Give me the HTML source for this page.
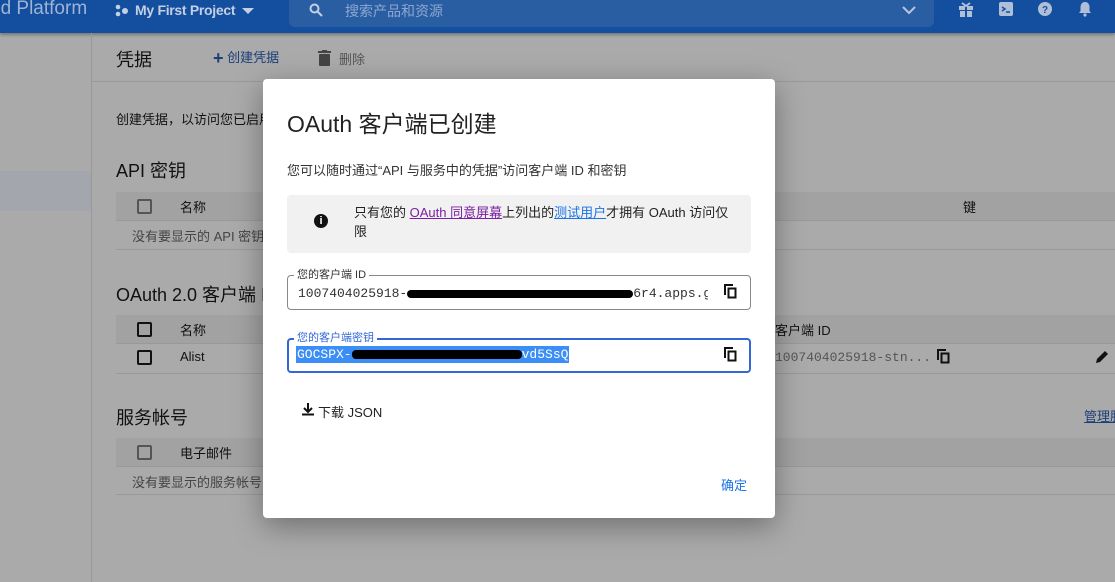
<!DOCTYPE html>
<html><head><meta charset="utf-8"><style>
*{box-sizing:border-box;margin:0;padding:0}
body{width:1115px;height:582px;overflow:hidden;background:#aaa;font-family:"Liberation Sans","Noto Sans CJK SC",sans-serif;position:relative;color:#111}
.a{position:absolute;white-space:nowrap}
.hdr{left:0;top:0;width:1115px;height:33px;background:#144e9e;box-shadow:0 2px 3px rgba(0,0,0,.3)}
.cb{width:15px;height:15px;border:2px solid #555;border-radius:2px}
.row{left:116px;width:1000px;border-bottom:1px solid #999}
.hd{background:#a2a2a2}
.t{font-size:13px}
.mono{font-family:"Liberation Mono","DejaVu Sans Mono",monospace}
</style></head><body>
<div class="a hdr">
 <div class="a" style="left:-10px;top:-2px;color:#9fb3d4;font-size:19px">ud Platform</div>
 <svg class="a" style="left:115px;top:4px" width="14" height="14" viewBox="0 0 14 14"><circle cx="3" cy="3" r="2.3" fill="#c3cfe3"/><circle cx="3" cy="10" r="2.3" fill="#c3cfe3"/><circle cx="10" cy="7" r="3" fill="#c3cfe3"/></svg>
 <div class="a" style="left:135px;top:2px;color:#c3cfe3;font-size:14px;font-weight:bold;letter-spacing:-0.3px">My First Project</div>
 <div class="a" style="left:242px;top:8px;border:6px solid transparent;border-top:6px solid #c3cfe3"></div>
 <div class="a" style="left:289px;top:0;width:645px;height:27px;background:#2a5ea3;border-radius:0 0 6px 6px"></div>
 <svg class="a" style="left:309px;top:3px" width="14" height="14" viewBox="0 0 14 14"><circle cx="5.5" cy="5.5" r="4" stroke="#c3cfe3" stroke-width="2" fill="none"/><path d="M8.5 8.5L13 13" stroke="#c3cfe3" stroke-width="2"/></svg>
 <div class="a" style="left:345px;top:1px;color:#8ea7cf;font-size:14px">搜索产品和资源</div>
 <svg class="a" style="left:902px;top:6px" width="14" height="9"><path d="M1 1l6 6 6-6" stroke="#b8c6dd" stroke-width="2" fill="none"/></svg>
 <svg class="a" style="left:959px;top:2px" width="14" height="16"><rect x="0" y="4" width="14" height="4" fill="#b0bfd8"/><rect x="1" y="9" width="12" height="6" fill="#b0bfd8"/><rect x="6" y="4" width="2" height="11" fill="#144e9e"/><path d="M3 1l4 3 4-3" stroke="#b0bfd8" stroke-width="2" fill="none"/></svg>
 <svg class="a" style="left:999px;top:2px" width="14" height="14"><rect width="14" height="14" rx="2" fill="#b0bfd8"/><path d="M3 5l3 2-3 2M7 10h4" stroke="#144e9e" stroke-width="1.5" fill="none"/></svg>
 <svg class="a" style="left:1038px;top:2px" width="14" height="14"><circle cx="7" cy="7" r="7" fill="#b0bfd8"/><text x="7" y="11" font-size="10" font-weight="bold" text-anchor="middle" fill="#144e9e" font-family="Liberation Sans">?</text></svg>
 <svg class="a" style="left:1078px;top:1px" width="14" height="16"><path d="M7 1c-3 0-4.5 2.5-4.5 5v4L1 12h12l-1.5-2V6C11.5 3.5 10 1 7 1z" fill="#b0bfd8"/><circle cx="7" cy="14" r="1.6" fill="#b0bfd8"/></svg>
</div>
<div class="a" style="left:91px;top:33px;width:1px;height:549px;background:#999"></div>
<div class="a" style="left:0;top:171px;width:91px;height:40px;background:#a3a6ac"></div>
<div class="a" style="left:92px;top:81px;width:1023px;height:1px;background:#999"></div>
<div class="a" style="left:116px;top:46px;font-size:18px">凭据</div>
<div class="a" style="left:213px;top:47px;font-size:13px;color:#1c3f78"><b style="font-size:18px;vertical-align:-2px">+</b> 创建凭据</div>
<svg class="a" style="left:318px;top:50px" width="13" height="16"><rect x="0" y="1" width="13" height="2" fill="#444"/><rect x="4" y="0" width="5" height="2" fill="#444"/><rect x="1" y="4" width="11" height="12" rx="1" fill="#444"/></svg>
<div class="a" style="left:339px;top:49px;font-size:13px;color:#555">删除</div>
<div class="a t" style="left:116px;top:109px">创建凭据，以访问您已启用</div>
<div class="a" style="left:116px;top:157px;font-size:18px">API 密钥</div>
<div class="a row hd" style="top:192px;height:29px"></div>
<div class="a cb" style="left:137px;top:199px"></div><div class="a t" style="left:180px;top:197px">名称</div><div class="a t" style="left:963px;top:197px">键</div>
<div class="a row" style="top:221px;height:29px"></div>
<div class="a t" style="left:132px;top:226px;color:#444">没有要显示的 API 密钥</div>
<div class="a" style="left:116px;top:281px;font-size:18px">OAuth 2.0 客户端 ID</div>
<div class="a row hd" style="top:315px;height:29px"></div>
<div class="a cb" style="left:137px;top:322px;border-color:#111"></div><div class="a t" style="left:180px;top:320px">名称</div><div class="a t" style="left:775px;top:320px">客户端 ID</div>
<div class="a row" style="top:344px;height:30px"></div>
<div class="a cb" style="left:137px;top:350px;border-color:#111"></div><div class="a t" style="left:180px;top:349px">Alist</div>
<div class="a t mono" style="left:775px;top:350px;color:#555">1007404025918-stn...</div>
<svg class="a" style="left:937px;top:349px" width="14" height="15"><path d="M1 11V1h8" stroke="#111" stroke-width="2" fill="none"/><rect x="4.5" y="4.5" width="7" height="9" stroke="#111" stroke-width="2" fill="none"/></svg>
<svg class="a" style="left:1094px;top:349px" width="16" height="16"><path d="M2 14l1-4 8-8 3 3-8 8z" fill="#111"/></svg>
<div class="a" style="left:116px;top:404px;font-size:18px">服务帐号</div>
<div class="a t" style="left:1084px;top:406px;color:#1c3f78;text-decoration:underline">管理服</div>
<div class="a row hd" style="top:438px;height:29px"></div>
<div class="a cb" style="left:137px;top:445px"></div><div class="a t" style="left:180px;top:443px">电子邮件</div>
<div class="a row" style="top:467px;height:28px"></div>
<div class="a t" style="left:132px;top:472px;color:#444">没有要显示的服务帐号</div>

<div class="a" style="left:263px;top:79px;width:512px;height:439px;background:#fff;border-radius:4px;box-shadow:0 8px 30px rgba(0,0,0,.35)">
 <div class="a" style="left:24px;top:26px;font-size:23px;color:#222">OAuth 客户端已创建</div>
 <div class="a t" style="left:24px;top:81px;color:#333">您可以随时通过“API 与服务中的凭据”访问客户端 ID 和密钥</div>
 <div class="a" style="left:24px;top:116px;width:464px;height:58px;background:#f1f1f1;border-radius:4px">
  <div class="a" style="left:27px;top:19px;width:14px;height:14px;border-radius:50%;background:#111;color:#fff;font-size:11px;font-weight:bold;text-align:center;line-height:14px">i</div>
  <div class="a t" style="left:67px;top:8px;width:380px;line-height:19px;color:#222;white-space:normal">只有您的 <span style="color:#7b1fa2;text-decoration:underline">OAuth 同意屏幕</span>上列出的<span style="color:#1a73e8;text-decoration:underline">测试用户</span>才拥有 OAuth 访问仅限</div>
 </div>
 <div class="a" style="left:24px;top:196px;width:464px;height:35px;border:1px solid #888;border-radius:4px"></div>
 <div class="a" style="left:31px;top:187px;background:#fff;padding:0 3px;font-size:11px;color:#333">您的客户端 ID</div>
 <div class="a mono" style="left:35px;top:207px;font-size:13px;color:#333;width:410px;overflow:hidden">1007404025918-<span style="display:inline-block;width:226px;height:8px;background:#000;border-radius:4px;vertical-align:middle"></span>6r4.apps.g</div>
 <svg class="a" style="left:461px;top:205px" width="14" height="15"><path d="M1 11V1h8" stroke="#111" stroke-width="2" fill="none"/><rect x="4.5" y="4.5" width="7" height="9" stroke="#111" stroke-width="2" fill="none"/></svg>
 <div class="a" style="left:24px;top:259px;width:464px;height:35px;border:2px solid #3367d6;border-radius:4px"></div>
 <div class="a" style="left:31px;top:250px;background:#fff;padding:0 3px;font-size:11px;color:#3367d6">您的客户端密钥</div>
 <div class="a mono" style="left:33px;top:267px;font-size:13px;color:#fff;background:#3a8ef6;padding:1px 1px">GOCSPX-<span style="display:inline-block;width:170px;height:9px;background:#000;border-radius:4px;vertical-align:middle"></span>vd5SsQ</div>
 <svg class="a" style="left:461px;top:268px" width="14" height="15"><path d="M1 11V1h8" stroke="#111" stroke-width="2" fill="none"/><rect x="4.5" y="4.5" width="7" height="9" stroke="#111" stroke-width="2" fill="none"/></svg>
 <svg class="a" style="left:38px;top:323px" width="14" height="14"><path d="M7 1v8M3 6l4 4 4-4M1 12.5h12" stroke="#111" stroke-width="2" fill="none"/></svg>
 <div class="a t" style="left:55px;top:323px;color:#222">下载 JSON</div>
 <div class="a t" style="left:458px;top:396px;color:#1a73e8">确定</div>
</div>
</body></html>
